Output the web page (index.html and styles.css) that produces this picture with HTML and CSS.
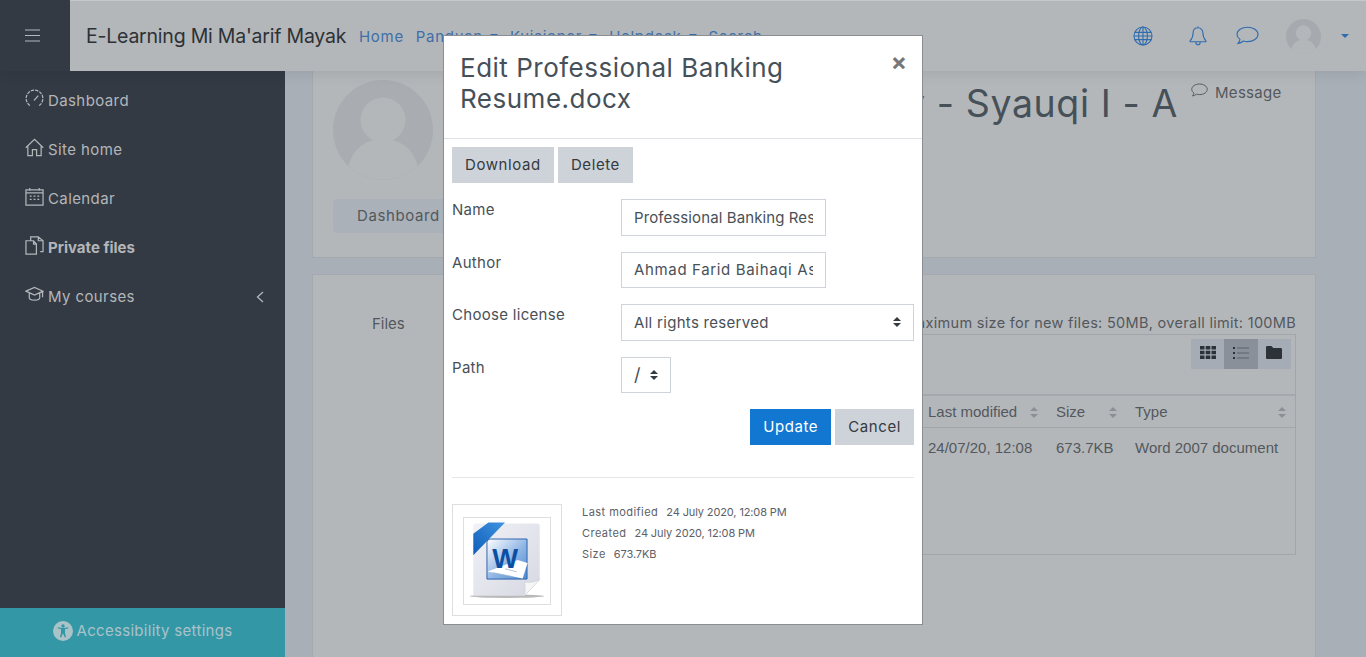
FILE: index.html
```html
<!DOCTYPE html>
<html lang="en">
    <head>
        <meta charset="utf-8" />
        <meta name="viewport" content="width=device-width, initial-scale=1" />
        <title>Edit Professional Banking Resume.docx</title>
        <link rel="stylesheet" href="styles.css">
    </head>
    <body>
        <header class="topbar">
            <button class="burger" aria-label="Menu">
                <svg width="15" height="13" viewBox="0 0 15 13"><path d="M0 1h15M0 6.500h15M0 12h15" /></svg>
            </button>
            <div class="topbar-main">
                <span class="brand">E-Learning Mi Ma'arif Mayak</span>
                <nav class="topnav">
                    <a>Home</a>
                    <a class="has-caret">Panduan</a>
                    <a class="has-caret">Kuisioner</a>
                    <a class="has-caret">Helpdesk</a>
                    <a>Search</a>
                </nav>
                <div class="topicons">
                    <svg class="ico-globe" width="20" height="20" viewBox="0 0 20 20"><circle cx="10" cy="10" r="9" /><ellipse cx="10" cy="10" rx="4.400" ry="9" /><path d="M10 1v18M1.800 6.400h16.400M1 10h18M1.800 13.600h16.400" /></svg>
                    <svg class="ico-bell" width="18" height="20" viewBox="0 0 18 20"><path d="M9 1.800c-3 0-4.900 2.200-4.900 5.200 0 4.500-1.300 6-3 7.800-.4.500 0 1 .5 1h14.800c.5 0 .9-.5.500-1-1.700-1.800-3-3.300-3-7.800 0-3-1.900-5.200-4.900-5.200zM9 .5v1.300M6.800 16c0 1.500 1 2.800 2.200 2.800s2.200-1.300 2.200-2.800" /></svg>
                    <svg class="ico-comment" width="23" height="20" viewBox="0 0 23 20"><path d="M11.500 1.200c-5.800 0-10.500 3.200-10.500 7.200 0 2 1.200 3.700 3 5-.3 1.500-1 2.800-2 4 2.200-.3 4-1.200 5.300-2.400 1.300.4 2.700.6 4.200.6 5.800 0 10.500-3.200 10.500-7.200s-4.700-7.200-10.500-7.200z" /></svg>
                    <span class="avatar-small">
                        <svg width="35" height="35" viewBox="0 0 100 100"><circle cx="50" cy="50" r="50" class="av-bg" /><circle cx="50" cy="40" r="22" class="av-fg" /><path d="M15 86c4-18 19-27 35-27s31 9 35 27a50 50 0 0 1-70 0z" class="av-fg" /></svg>
                    </span>
                    <span class="caret-only"></span>
                </div>
            </div>
        </header>

        <div class="layout">
            <aside class="sidebar">
                <ul class="sidenav">
                    <li>
                        <svg viewBox="0 0 20 20"><path d="M5.200 17.400A8.800 8.800 0 1 1 14.800 17.400" stroke-dasharray="3.500 1.100" /><path d="M10 11.500 14 7" /><circle cx="10" cy="11.500" r=".8" /></svg>
                        Dashboard
                    </li>
                    <li>
                        <svg viewBox="0 0 20 20"><path d="M.8 10.200 10 1.500l9.200 8.700M3 8.500v10h4.800v-6.200h4.400v6.200H17v-10" /></svg>
                        Site home
                    </li>
                    <li>
                        <svg viewBox="0 0 20 20"><path d="M1 3h18v16H1zM1 6.300h18M5 1v3M15 1v3" /><path d="M5 9.500h2M9 9.500h2M13 9.500h2M5 13h2M9 13h2M13 13h2" stroke-width="2" /></svg>
                        Calendar
                    </li>
                    <li class="is-active">
                        <svg viewBox="0 0 20 20"><path d="M1 5h8l3 3.500V19H1zM9 5v3.500h3M6 5V1h8l5 4v11.500h-3M14 1v4h5" /></svg>
                        Private files
                    </li>
                    <li class="has-chevron">
                        <svg viewBox="0 0 20 20"><path d="M1 6.500 10 2.500l9 4-9 4zM4.500 8.500v5c0 1.500 2.500 2.500 5.500 2.500s5.500-1 5.500-2.500v-5M18.500 7v6" /></svg>
                        My courses
                        <svg class="chevron" width="8" height="12" viewBox="0 0 8 12"><path d="M7 1 1.500 6 7 11" /></svg>
                    </li>
                </ul>
                <div class="access">
                    <svg width="20" height="20" viewBox="0 0 20 20"><circle cx="10" cy="10" r="10" class="acc-bg" /><circle cx="10" cy="5" r="1.700" class="acc-fg" /><path d="M4.500 7.300 8 8.300v3.500L7 16.300h1.300l1.700-4 1.700 4H13l-1-4.500V8.300l3.500-1-.3-1-3.700.8H8.500L4.800 6.300z" class="acc-fg" /></svg>
                    Accessibility settings
                </div>
            </aside>

            <main class="content">
                <section class="card card-profile">
                    <div class="profile-row">
                        <svg class="avatar-big" width="100" height="100" viewBox="0 0 100 100"><circle cx="50" cy="50" r="50" class="big-bg" /><circle cx="50" cy="40" r="22.500" class="big-fg" /><path d="M15.500 86c4-18 18.500-27 34.500-27s30.500 9 34.500 27a50 50 0 0 1-69 0z" class="big-fg" /></svg>
                        <h1 class="profile-name">Asy - Syauqi I - A</h1>
                        <a class="message-link">
                            <svg width="17" height="15" viewBox="0 0 23 20"><path d="M11.500 1.200c-5.800 0-10.500 3.200-10.500 7.200 0 2 1.200 3.700 3 5-.3 1.500-1 2.800-2 4 2.200-.3 4-1.200 5.300-2.400 1.300.4 2.700.6 4.200.6 5.800 0 10.500-3.200 10.500-7.200s-4.700-7.200-10.500-7.200z" /></svg>
                            Message
                        </a>
                    </div>
                    <a class="dash-btn">Dashboard</a>
                </section>

                <section class="card card-files">
                    <div class="files-label">Files</div>
                    <div class="files-col">
                        <p class="files-limit">Maximum size for new files: 50MB, overall limit: 100MB</p>
                        <div class="fm">
                            <div class="fm-toolbar">
                                <div class="fm-views">
                                    <span><svg width="16" height="13" viewBox="0 0 16 13"><path d="M0 0h4.500v3.500H0zM5.700 0h4.600v3.500H5.700zM11.500 0H16v3.500h-4.500zM0 4.700h4.500v3.600H0zM5.700 4.700h4.600v3.600H5.700zM11.500 4.700H16v3.600h-4.500zM0 9.500h4.500V13H0zM5.700 9.500h4.600V13H5.700zM11.500 9.500H16V13h-4.500z" /></svg></span>
                                    <span class="is-on"><svg width="16" height="12" viewBox="0 0 16 12"><path d="M0 0h2v2H0zM0 5h2v2H0zM0 10h2v2H0z" /><path class="thin" d="M4 .5h12v1H4zM4 5.500h12v1H4zM4 10.500h12v1H4z" /></svg></span>
                                    <span><svg width="16" height="13" viewBox="0 0 16 13"><path d="M1.300 0h4.200l1.800 2h7.400c.7 0 1.300.6 1.300 1.300v8.400c0 .7-.6 1.300-1.300 1.300H1.300C.6 13 0 12.400 0 11.700V1.300C0 .6.600 0 1.300 0z" /></svg></span>
                                </div>
                            </div>
                            <table class="fm-table">
                                <thead>
                                    <tr>
                                        <th>Name</th>
                                        <th class="col-date">Last modified <i class="sort"></i></th>
                                        <th class="col-size">Size <i class="sort"></i></th>
                                        <th class="col-type">Type <i class="sort"></i></th>
                                    </tr>
                                </thead>
                                <tbody>
                                    <tr>
                                        <td>Professional Banking Resume.docx</td>
                                        <td>24/07/20, 12:08</td>
                                        <td>673.7KB</td>
                                        <td>Word 2007 document</td>
                                    </tr>
                                </tbody>
                            </table>
                        </div>
                    </div>
                </section>
            </main>
        </div>

        <div class="modal">
            <div class="modal-head">
                <h2 class="modal-title">Edit Professional Banking Resume.docx</h2>
                <span class="modal-close">×</span>
            </div>
            <div class="modal-body">
                <div class="btn-row">
                    <button class="btn">Download</button>
                    <button class="btn">Delete</button>
                </div>
                <form class="form-grid">
                    <label>Name</label>
                    <input class="field field-text field-name" type="text" value="Professional Banking Resume.docx">
                    <label>Author</label>
                    <input class="field field-text field-author" type="text" value="Ahmad Farid Baihaqi Asy - Syauqi">
                    <label>Choose license</label>
                    <div class="field field-select">All rights reserved <i class="updown"></i></div>
                    <label>Path</label>
                    <div class="field field-path">/ <i class="updown"></i></div>
                </form>
                <div class="btn-row btn-row-end">
                    <button class="btn btn-primary">Update</button>
                    <button class="btn">Cancel</button>
                </div>
                <hr class="modal-rule">
                <div class="preview">
                    <div class="thumb">
                        <div class="thumb-inner">
                            <svg width="86" height="86" viewBox="0 0 88 88">
                                <defs>
                                    <linearGradient id="paper" x1="0" y1="0" x2="1" y2="1"><stop offset="0" stop-color="#f1f2f7" /><stop offset="1" stop-color="#d6d8e2" /></linearGradient>
                                    <linearGradient id="tile" x1="0" y1="0" x2="1" y2="1"><stop offset="0" stop-color="#ffffff" /><stop offset=".55" stop-color="#8fb5e4" /><stop offset="1" stop-color="#4f8bd2" /></linearGradient>
                                    <linearGradient id="ribbon" x1="0" y1="1" x2="1" y2="0"><stop offset="0" stop-color="#0f5db8" /><stop offset="1" stop-color="#3f93e0" /></linearGradient>
                                </defs>
                                <ellipse cx="44" cy="80" rx="38" ry="1.800" fill="#b9b9b9" />
                                <path d="M12 5.500h63c1.400 0 2.500 1.100 2.500 2.500v55L62 79.500H12c-1.400 0-2.500-1.100-2.500-2.500V8c0-1.400 1.100-2.500 2.500-2.500z" fill="url(#paper)" />
                                <path d="M62 79.500c1-6 .5-11 0-14 5 .8 10 .3 15.500-2.500z" fill="#f6f6f6" stroke="#c9cbd2" stroke-width=".6" />
                                <path d="M9.500 38V16L25 4.700h17z" fill="url(#ribbon)" />
                                <path d="M27 21.500h37.500v41H23.500V25c0-2 1.500-3.500 3.500-3.500z" fill="url(#tile)" stroke="#2d62ad" stroke-width="1" />
                                <path d="M24 54.700 60 62l5-16-10-3z" fill="#fff" />
                                <path d="M30 56 50 60M42 52l12 3" stroke="#9db5d3" stroke-width=".8" />
                                <text x="29" y="51" class="word-w">W</text>
                            </svg>
                        </div>
                    </div>
                    <dl class="meta">
                        <div><dt>Last modified</dt> <dd>24 July 2020, 12:08 PM</dd></div>
                        <div><dt>Created</dt> <dd>24 July 2020, 12:08 PM</dd></div>
                        <div><dt>Size</dt> <dd>673.7KB</dd></div>
                    </dl>
                </div>
            </div>
        </div>
    </body>
</html>
```

FILE: styles.css
```css
* { margin: 0; padding: 0; box-sizing: border-box; }
html, body { height: 657px; overflow: hidden; }
body { font-family: Inter, "Liberation Sans", sans-serif; background: #a8afb7; color: #53585d; font-size: 15px; position: relative; }
svg { flex: none; }
a { text-decoration: none; }

/* barra superior */
.topbar { display: flex; height: 71px; position: relative; z-index: 2; box-shadow: 0 2px 14px rgba(0,0,0,.09); }
.burger { width: 70px; background: #333a44; border: 0; display: flex; align-items: center; padding: 0 0 1px 25px; }
.burger svg path { stroke: #b5b8bb; stroke-width: 1.200; fill: none; }
.topbar-main { flex: 1; display: flex; align-items: center; padding: 0 17px 0 16px; background: #b4b7ba; border-top: 1px solid #c6c9cb; }
.brand { font-size: 19.500px; color: #2d3136; letter-spacing: -.22px; width: 273px; white-space: nowrap; }
.topnav { display: flex; gap: 12px; font-size: 15px; color: #3d6fa8; letter-spacing: .7px; }
.topnav a { white-space: nowrap; }
.has-caret { display: flex; align-items: center; gap: 7px; }
.has-caret::after, .caret-only { content: ""; display: block; border: 4.500px solid transparent; border-top-color: #2f6cae; border-bottom: 0; }
.topicons { margin-left: auto; display: flex; align-items: center; }
.topicons svg path, .topicons svg circle, .topicons svg ellipse { fill: none; stroke: #2f6cae; stroke-width: 1.100; }
.ico-globe { margin-right: 36px; }
.ico-bell { margin-right: 29px; }
.ico-comment { margin-right: 27px; }
.avatar-small { display: flex; margin-right: 20px; }
.topicons .avatar-small svg .av-bg { fill: #a6a9ad; stroke: none; }
.topicons .avatar-small svg .av-fg { fill: #b4b7ba; stroke: none; }

/* columnas */
.layout { display: flex; height: 586px; }
.sidebar { width: 285px; background: #333a44; display: flex; flex-direction: column; justify-content: space-between; }
.sidenav { list-style: none; padding-top: 5px; }
.sidenav li { height: 49px; display: flex; align-items: center; gap: 4px; padding-left: 25px; color: #b3b6b9; font-size: 15px; letter-spacing: .4px; }
.sidenav li > svg:first-child { width: 19px; height: 19px; margin-top: -4px; }
.sidenav svg path { fill: none; stroke: #b3b6b9; stroke-width: 1.300; }
.sidenav svg circle { fill: #b3b6b9; }
.sidenav .is-active { font-weight: 700; letter-spacing: 0; }
.has-chevron .chevron { margin-left: auto; margin-right: 21px; }
.access { height: 49px; background: #3397a6; color: #a9c3c9; display: flex; align-items: center; justify-content: center; gap: 4px; font-size: 15px; letter-spacing: .3px; padding-bottom: 4px; }
.acc-bg { fill: #a9c3c9; }
.acc-fg { fill: #3397a6; }

/* contenido */
.content { flex: 1; padding: 0 50px 0 27px; overflow: hidden; }
.card { background: #b4b7ba; border: 1px solid #a4a9af; }
.card-profile { height: 187px; border-top: 0; padding: 9px 20px 0; }
.profile-row { display: flex; align-items: flex-start; }
.avatar-big .big-bg { fill: #a9acb0; }
.avatar-big .big-fg { fill: #b4b7ba; }
.profile-name { font-size: 37.500px; font-weight: 400; color: #465059; margin-left: auto; white-space: nowrap; padding-top: 1px; letter-spacing: .6px; }
.message-link { display: flex; align-items: center; gap: 7px; width: 104px; margin-left: 13px; color: #53585d; font-size: 15px; padding-top: 3px; letter-spacing: .3px; }
.message-link svg { margin-top: -4px; }
.message-link svg path { fill: none; stroke: #53585d; stroke-width: 1.300; }
.dash-btn { display: block; width: 130px; height: 34px; line-height: 34px; margin-top: 19px; padding-left: 24px; background: #aab1b9; border-radius: 4px; color: #53585d; font-size: 15px; letter-spacing: .6px; }

.card-files { margin-top: 16px; height: 400px; display: flex; padding: 37px 19px 0 20px; }
.files-label { width: 125px; padding: 2px 0 0 39px; }
.files-col { flex: 1; }
.files-limit { text-align: right; font-size: 14.500px; white-space: nowrap; height: 22px; padding-top: 2px; letter-spacing: .3px; }
.fm { border: 1px solid #a2a6aa; height: 221px; }
.fm-toolbar { height: 61px; padding: 4px 4px 0 0; display: flex; justify-content: flex-end; border-bottom: 2px solid #a5a9ad; }
.fm-views { display: flex; height: 30px; background: #a5acb5; }
.fm-views span { width: 33.300px; display: flex; align-items: center; justify-content: center; padding-bottom: 3px; }
.fm-views .is-on { background: #8a9099; }
.fm-views svg path { fill: #2d3238; }
.fm-views svg .thin { fill: #5d6269; }
.fm-table { width: 100%; border-collapse: collapse; table-layout: fixed; font-family: "Liberation Sans", Arial, sans-serif; font-size: 15px; color: #53585d; }
.fm-table th { font-weight: 400; height: 31px; text-align: left; padding-left: 8px; border-bottom: 1px solid #a2a6aa; position: relative; white-space: nowrap; }
.fm-table td { padding: 11px 0 0 8px; white-space: nowrap; overflow: hidden; }
.col-date { width: 128px; }
.col-size { width: 79px; }
.col-type { width: 168px; }
.sort { position: absolute; right: 10px; top: 11px; width: 8px; height: 11px; }
.sort::before, .sort::after { content: ""; position: absolute; left: 0; border: 4px solid transparent; }
.sort::before { top: 0; border-bottom: 4px solid #8b9095; border-top: 0; }
.sort::after { bottom: 0; border-top: 4px solid #8b9095; border-bottom: 0; }
.col-type .sort { right: 9px; }

/* modal encima del contenido */
.modal { position: absolute; left: 443px; top: 35px; width: 480px; height: 590px; background: #fff; border: 1px solid #8a8e92; color: #495057; z-index: 5; }
.modal-head { height: 103px; border-bottom: 1px solid #dee2e6; display: flex; justify-content: space-between; padding: 16px 15px 0 16px; }
.modal-title { font-size: 26px; font-weight: 400; line-height: 31px; color: #465059; width: 370px; letter-spacing: .5px; }
.modal-close { font-size: 24px; line-height: 20px; font-weight: 700; color: #777; }
.modal-body { padding: 8px 8px 0 8px; }
.btn-row { display: flex; gap: 4px; }
.btn-row-end { justify-content: flex-end; margin-top: 16px; }
.btn { height: 36px; padding: 0 13px 2px; border: 0; background: #ced3da; color: #343a40; font-family: Inter, "Liberation Sans", sans-serif; font-size: 15px; letter-spacing: .6px; }
.btn-primary { background: #1177d1; color: #fff; }
.form-grid { display: grid; grid-template-columns: 169px 293px; row-gap: 16px; margin-top: 16px; font-size: 15px; letter-spacing: .3px; }
.form-grid label { padding-top: 1px; color: #495057; }
.field { height: 36.500px; border: 1px solid #ced4da; background: #fff; color: #495057; font-family: Inter, "Liberation Sans", sans-serif; font-size: 15px; letter-spacing: .3px; padding: 0 12px; }
.field-text { width: 205px; }
.field-name { letter-spacing: .1px; }
.field-author { letter-spacing: .65px; }
.field-select { display: flex; align-items: center; justify-content: space-between; }
.field-path { width: 50px; display: flex; align-items: center; justify-content: space-between; font-size: 18px; }
.updown { display: block; width: 8px; height: 10px; position: relative; }
.updown::before, .updown::after { content: ""; position: absolute; left: 0; border: 4px solid transparent; }
.updown::before { top: 0; border-bottom: 4px solid #343a40; border-top: 0; }
.updown::after { bottom: 0; border-top: 4px solid #343a40; border-bottom: 0; }
.modal-rule { border: 0; border-top: 1px solid #e4e6e8; margin-top: 32px; }
.preview { display: flex; margin-top: 26px; }
.thumb { width: 110px; height: 112px; border: 1px solid #dedede; padding: 12px 10px; }
.thumb-inner { width: 88px; height: 88px; border: 1px solid #dedede; }
.thumb-inner svg { display: block; }
.word-w { font-family: "Liberation Sans", Arial, sans-serif; font-weight: 700; font-size: 28px; fill: #0b4ea2; }
.meta { margin: -3px 0 0 20px; font-size: 11px; color: #5b6168; }
.meta div { height: 21px; display: flex; gap: 8px; align-items: center; white-space: nowrap; }
.meta dt { letter-spacing: .45px; }
.meta dd { letter-spacing: -.12px; }
```
